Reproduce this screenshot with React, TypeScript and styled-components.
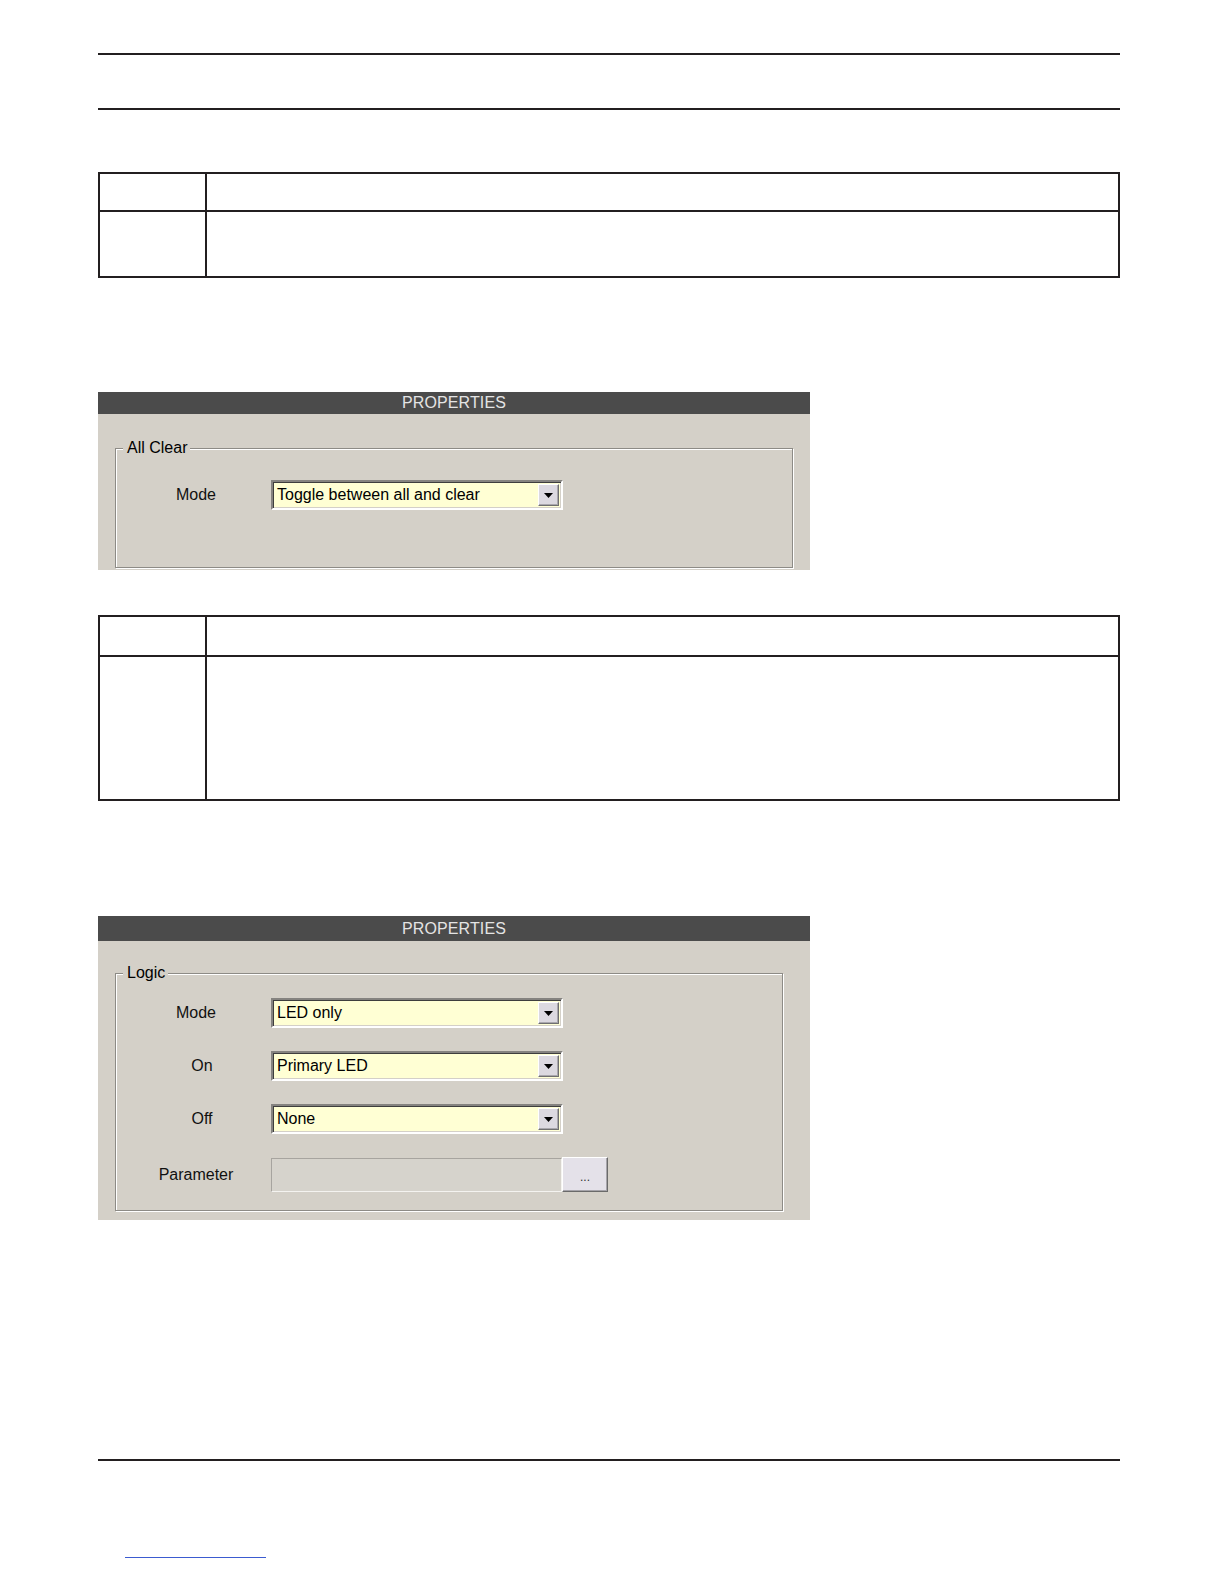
import React from "react";
import styled, { createGlobalStyle } from "styled-components";

const Global = createGlobalStyle`
  html, body { margin: 0; padding: 0; background: #ffffff; }
  body { font-family: "Liberation Sans", Arial, sans-serif; color: #000; }
`;

const Page = styled.div`
  width: 1224px;
  height: 1584px;
  box-sizing: border-box;
  padding: 53px 104px 0 98px;
  display: flex;
  flex-direction: column;
  overflow: hidden;
`;

const Rule = styled.div<{ $top: number }>`
  height: 2px;
  background: #231f20;
  margin-top: ${(p) => p.$top}px;
`;

const Table = styled.div<{ $top: number }>`
  margin-top: ${(p) => p.$top}px;
  border: 2px solid #231f20;
  display: flex;
  flex-direction: column;
`;

const TableRow = styled.div<{ $h: number; $last?: boolean }>`
  display: grid;
  grid-template-columns: 107px 1fr;
  height: ${(p) => p.$h}px;
  border-bottom: ${(p) => (p.$last ? "none" : "2px solid #231f20")};
`;

const KeyCell = styled.div`
  border-right: 2px solid #231f20;
`;

const ValueCell = styled.div``;

const Panel = styled.section<{ $top: number }>`
  width: 712px;
  margin-top: ${(p) => p.$top}px;
  background: #d4d0c8;
  font-family: "Liberation Sans", Arial, sans-serif;
  font-size: 16px;
`;

const PanelHeader = styled.div<{ $h: number }>`
  height: ${(p) => p.$h}px;
  line-height: ${(p) => p.$h}px;
  background: #4b4b4b;
  color: #e4e4e4;
  text-align: center;
  font-size: 16px;
  letter-spacing: 0.1px;
  padding-left: 0;
`;

const PanelBody = styled.div<{ $pt: number; $pr: number; $pb: number }>`
  padding: ${(p) => p.$pt}px ${(p) => p.$pr}px ${(p) => p.$pb}px 17px;
`;

const GroupBox = styled.fieldset<{ $pb: number }>`
  margin: 0;
  padding: 0 0 ${(p) => p.$pb}px 0;
  min-width: 0;
  border: 1px solid #8d8b86;
  box-shadow: 1px 1px 0 #ffffff, inset 1px 1px 0 #ffffff;
`;

const Legend = styled.legend`
  margin-left: 7px;
  padding: 0 3px 0 4px;
  height: 18px;
  line-height: 18px;
  font-size: 16px;
  background: #d4d0c8;
  color: #000;
`;

const FieldRow = styled.div<{ $mt: number }>`
  display: flex;
  align-items: center;
  margin-top: ${(p) => p.$mt}px;
  padding-left: 41px;
`;

const FieldLabel = styled.div<{ $shift?: number }>`
  width: 78px;
  margin-right: 36px;
  box-sizing: border-box;
  padding-left: ${(p) => (p.$shift ?? 0) * 2}px;
  text-align: center;
  font-size: 16px;
  color: #111;
`;

const Combo = styled.div`
  width: 292px;
  height: 30px;
  box-sizing: border-box;
  display: flex;
  align-items: center;
  background: #ffffd4;
  border: 2px solid;
  border-color: #858380 #ffffff #ffffff #858380;
  box-shadow: inset 1px 1px 0 #3e3e3e, inset -1px -1px 0 #d4d0c8;
`;

const ComboText = styled.span`
  flex: 1;
  padding-left: 4px;
  font-size: 16px;
  color: #000;
  white-space: nowrap;
`;

const ComboButton = styled.div`
  width: 21px;
  height: 22px;
  margin-right: 2px;
  box-sizing: border-box;
  background: #dcd9e0;
  border: 1px solid;
  border-color: #ffffff #6f6f6f #6f6f6f #ffffff;
  box-shadow: inset -1px -1px 0 #a9a7ad;
  display: flex;
  align-items: center;
  justify-content: center;
`;

const TextBox = styled.div`
  width: 291px;
  height: 34px;
  box-sizing: border-box;
  background: #d6d3cc;
  border: 1px solid;
  border-color: #a7a49f #f4f3f0 #f4f3f0 #a7a49f;
`;

const DotsButton = styled.div`
  width: 46px;
  height: 35px;
  box-sizing: border-box;
  background: #e4e1e9;
  border: 1px solid;
  border-color: #ffffff #6a6a6a #6a6a6a #ffffff;
  box-shadow: inset -1px -1px 0 #a6a4aa;
  display: flex;
  align-items: flex-end;
  justify-content: center;
  padding-bottom: 8px;
  font-size: 12px;
  line-height: 12px;
  color: #333;
`;

const LinkLine = styled.div`
  margin-top: 96px;
  margin-left: 27px;
  width: 141px;
  height: 1px;
  background: #3b5bd0;
`;

const Arrow = () => (
  <svg width="9" height="5" viewBox="0 0 9 5">
    <path d="M0 0 H9 L4.5 5 Z" fill="#000" />
  </svg>
);

const Select = ({ value }: { value: string }) => (
  <Combo>
    <ComboText>{value}</ComboText>
    <ComboButton>
      <Arrow />
    </ComboButton>
  </Combo>
);

export default function App() {
  return (
    <>
      <Global />
      <Page>
        <Rule $top={0} />
        <Rule $top={53} />

        <Table $top={62}>
          <TableRow $h={36}>
            <KeyCell />
            <ValueCell />
          </TableRow>
          <TableRow $h={64} $last>
            <KeyCell />
            <ValueCell />
          </TableRow>
        </Table>

        <Panel $top={114}>
          <PanelHeader $h={22}>PROPERTIES</PanelHeader>
          <PanelBody $pt={25} $pr={17} $pb={2}>
            <GroupBox $pb={57}>
              <Legend>All Clear</Legend>
              <FieldRow $mt={23}>
                <FieldLabel>Mode</FieldLabel>
                <Select value="Toggle between all and clear" />
              </FieldRow>
            </GroupBox>
          </PanelBody>
        </Panel>

        <Table $top={45}>
          <TableRow $h={38}>
            <KeyCell />
            <ValueCell />
          </TableRow>
          <TableRow $h={142} $last>
            <KeyCell />
            <ValueCell />
          </TableRow>
        </Table>

        <Panel $top={115}>
          <PanelHeader $h={25}>PROPERTIES</PanelHeader>
          <PanelBody $pt={23} $pr={27} $pb={9}>
            <GroupBox $pb={18}>
              <Legend>Logic</Legend>
              <FieldRow $mt={16}>
                <FieldLabel>Mode</FieldLabel>
                <Select value="LED only" />
              </FieldRow>
              <FieldRow $mt={23}>
                <FieldLabel $shift={6}>On</FieldLabel>
                <Select value="Primary LED" />
              </FieldRow>
              <FieldRow $mt={23}>
                <FieldLabel $shift={6}>Off</FieldLabel>
                <Select value="None" />
              </FieldRow>
              <FieldRow $mt={23}>
                <FieldLabel>Parameter</FieldLabel>
                <TextBox />
                <DotsButton>...</DotsButton>
              </FieldRow>
            </GroupBox>
          </PanelBody>
        </Panel>

        <Rule $top={239} />
        <LinkLine />
      </Page>
    </>
  );
}
